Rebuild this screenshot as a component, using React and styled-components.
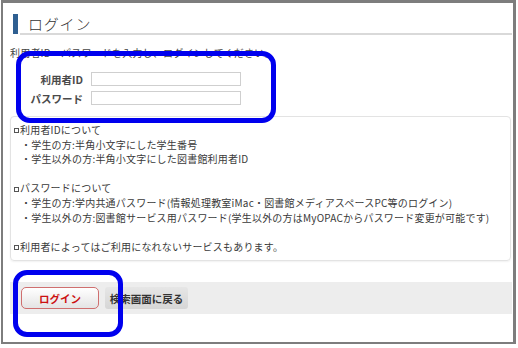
import React from "react";
import styled, { createGlobalStyle } from "styled-components";

const Global = createGlobalStyle`
  html, body { margin: 0; padding: 0; background: #fff; }
  body { font-family: "Noto Sans CJK JP", "Noto Sans", sans-serif; color: #333; }
`;

const Frame = styled.div`
  position: relative;
  box-sizing: border-box;
  margin-left: 1px;
  width: 515px;
  height: 344px;
  border-style: solid;
  border-color: #7d7d7d;
  border-width: 3px 3px 2px 2px;
  background: #fff;
  padding: 0 1px 0 7px;
`;

const TitleRow = styled.div`
  display: flex;
  align-items: flex-start;
  margin: 11px 0 0 3px;
`;

const TitleBar = styled.div`
  width: 5px;
  height: 20px;
  background: #2f5f91;
  margin-right: 2px;
`;

const TitleText = styled.h1`
  flex: 1;
  margin: 0;
  height: 19px;
  line-height: 19px;
  border-bottom: 2px solid #d9d9d9;
  padding-left: 8px;
  font-size: 15px;
  font-weight: 300;
  color: #333;
  letter-spacing: 0.8px;
`;

const Intro = styled.p`
  margin: 11px 0 0;
  font-size: 10px;
  line-height: 14px;
  color: #444;
  white-space: nowrap;
  letter-spacing: 0.2px;
`;

const Form = styled.div`
  display: flex;
  flex-direction: column;
  gap: 5px;
  margin-top: 12px;
`;

const FieldRow = styled.div`
  display: flex;
  align-items: center;
  gap: 8px;
  height: 14px;
`;

const Label = styled.label`
  width: 73px;
  text-align: right;
  font-size: 10.5px;
  font-weight: bold;
  color: #4a4a4a;
  white-space: nowrap;
`;

const Input = styled.input`
  box-sizing: border-box;
  width: 150px;
  height: 14px;
  border: 1px solid #cfcfcf;
  padding: 0;
  margin: 0;
  background: #fff;
`;

const InfoBox = styled.div`
  box-sizing: border-box;
  margin-top: 11px;
  margin-right: 1px;
  height: 145px;
  border: 1px solid #e3e3e3;
  border-radius: 4px;
  box-shadow: 0 1px 2px rgba(0, 0, 0, 0.06);
  padding: 6px 0 0 3px;
  font-size: 10px;
  line-height: 14.6px;
  color: #3a3a3a;
  letter-spacing: 0.2px;
`;

const Line = styled.div`
  white-space: nowrap;
  padding-left: ${(p) => (p.$indent ? "7px" : "0")};
  height: 14.6px;
`;

const Square = styled.span`
  display: inline-block;
  box-sizing: border-box;
  width: 5px;
  height: 5px;
  border: 1px solid #555;
  margin: 0 1px 1px 0;
  vertical-align: middle;
`;

const ButtonBar = styled.div`
  display: flex;
  align-items: center;
  gap: 6px;
  margin-top: 21px;
  height: 32px;
  background: #ededed;
  padding-left: 11px;
`;

const LoginButton = styled.button`
  box-sizing: border-box;
  width: 78px;
  height: 22px;
  border: 1px solid #cf6f6f;
  border-radius: 5px;
  background: linear-gradient(#ffffff, #e4e4e4);
  color: #cc1111;
  font-family: inherit;
  font-size: 10.5px;
  font-weight: bold;
  padding: 0;
`;

const BackButton = styled.button`
  box-sizing: border-box;
  width: 83px;
  height: 22px;
  border: none;
  border-radius: 3px;
  background: linear-gradient(#e6e6e6, #d6d6d6);
  color: #333;
  font-family: inherit;
  font-size: 10.5px;
  font-weight: bold;
  padding: 0;
`;

const Annotation = styled.div`
  position: absolute;
  box-sizing: border-box;
  border: 5px solid #0000ee;
  border-radius: 14px;
  pointer-events: none;
  left: ${(p) => p.$x}px;
  top: ${(p) => p.$y}px;
  width: ${(p) => p.$w}px;
  height: ${(p) => p.$h}px;
`;

export default function App() {
  return (
    <>
      <Global />
      <Frame>
        <TitleRow>
          <TitleBar />
          <TitleText>ログイン</TitleText>
        </TitleRow>
        <Intro>利用者ID・パスワードを入力し、ログインしてください。</Intro>
        <Form>
          <FieldRow>
            <Label>利用者ID</Label>
            <Input type="text" />
          </FieldRow>
          <FieldRow>
            <Label>パスワード</Label>
            <Input type="password" />
          </FieldRow>
        </Form>
        <InfoBox>
          <Line><Square />利用者IDについて</Line>
          <Line $indent>・学生の方:半角小文字にした学生番号</Line>
          <Line $indent>・学生以外の方:半角小文字にした図書館利用者ID</Line>
          <Line />
          <Line><Square />パスワードについて</Line>
          <Line $indent>・学生の方:学内共通パスワード(情報処理教室iMac・図書館メディアスペースPC等のログイン)</Line>
          <Line $indent>・学生以外の方:図書館サービス用パスワード(学生以外の方はMyOPACからパスワード変更が可能です)</Line>
          <Line />
          <Line><Square />利用者によってはご利用になれないサービスもあります。</Line>
        </InfoBox>
        <ButtonBar>
          <LoginButton>ログイン</LoginButton>
          <BackButton>検索画面に戻る</BackButton>
        </ButtonBar>
        <Annotation $x={13} $y={48} $w={260} $h={72} />
        <Annotation $x={10} $y={267} $w={110} $h={67} />
      </Frame>
    </>
  );
}
